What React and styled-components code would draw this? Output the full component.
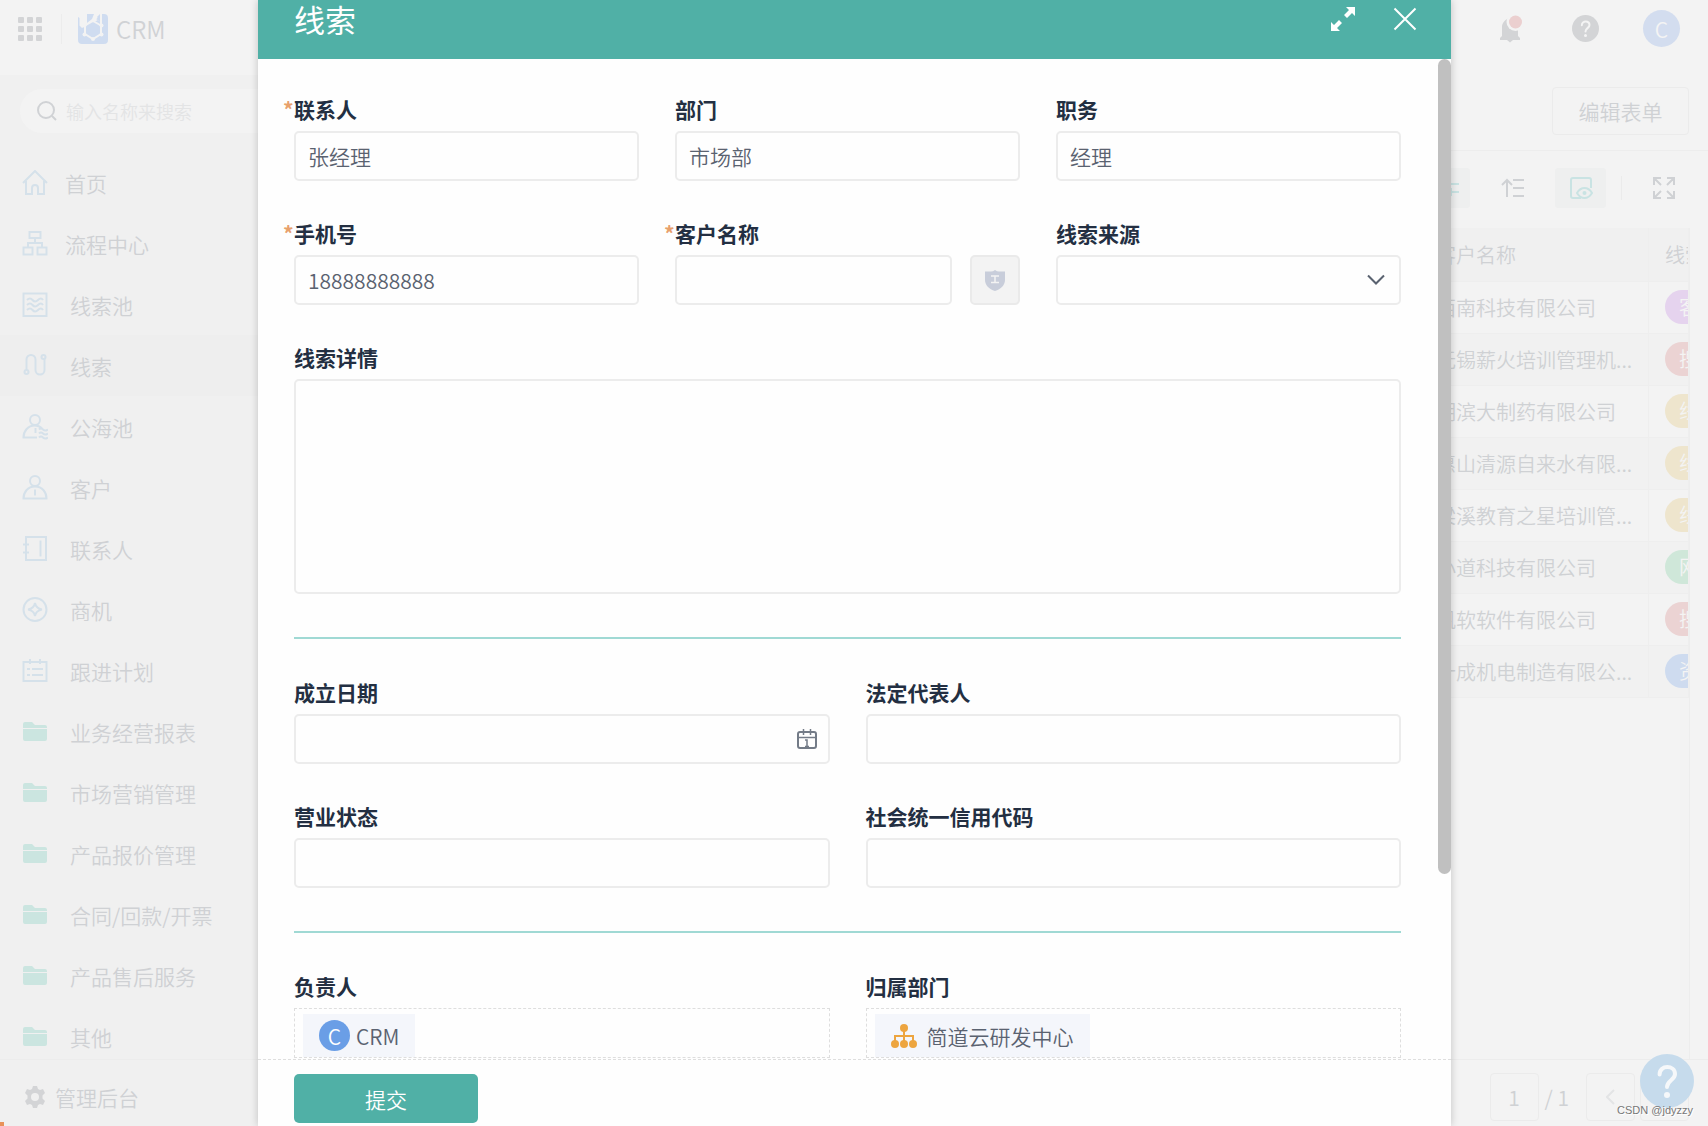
import React from "react";
import styled, { createGlobalStyle, css } from "styled-components";

const GlobalStyle = createGlobalStyle`
    * {
        box-sizing: border-box;
    }

    body {
        margin: 0;
        font-family: "Noto Sans CJK SC", "Noto Sans", sans-serif;
        font-size: 21px;
        font-weight: 350;
        color: #5a6270;
        background: #f3f3f3;
    }

    button, input, select, textarea {
        font: inherit;
        color: inherit;
    }

    button {
        padding: 0;
        border: none;
        background: none;
    }
`;

const Page = styled.div`
    display: flex;
    flex-direction: column;
    position: relative;
    height: 100vh;
    overflow: hidden;
`;

const TopBar = styled.header`
    display: flex;
    align-items: center;
    flex: none;
    height: 75px;
    padding: 0 28px 18px 18px;
    background: #f3f3f3;
`;

const Brand = styled.div`
    display: flex;
    align-items: center;
    gap: 8px;
    flex: 1;
    margin-left: 19px;
    padding-left: 16px;
    border-left: 1px solid #ececec;
    font-size: 24px;
    line-height: 30px;
    color: #d0d2d5;
`;

const TopActions = styled.div`
    display: flex;
    align-items: center;
    gap: 44px;
`;

const Avatar = styled.span`
    display: inline-flex;
    align-items: center;
    justify-content: center;
    border-radius: 50%;

    ${props => css`
        width: ${props.$size}px;
        height: ${props.$size}px;
        color: ${props.$color};
        background: ${props.$bg};
    `}
`;

const Columns = styled.div`
    display: flex;
    flex: 1;
    min-height: 0;
`;

const Sidebar = styled.aside`
    display: flex;
    flex-direction: column;
    width: 280px;
    background: #f0f0f0;
`;

const Search = styled.label`
    display: flex;
    align-items: center;
    gap: 7px;
    height: 44px;
    margin: 14px 0 19px 20px;
    padding-left: 17px;
    border-radius: 22px;
    background: #f3f3f3;
`;

const SearchInput = styled.input`
    flex: 1;
    min-width: 0;
    border: none;
    outline: none;
    background: none;
    font-size: 18px;

    &::placeholder {
        color: #e3e4e5;
    }
`;

const Nav = styled.nav`
    flex: 1;
    min-height: 0;
    overflow: hidden;
`;

const NavItem = styled.a`
    display: flex;
    align-items: center;
    height: 61px;
    padding-left: 22px;
    color: #cfd1d4;
    text-decoration: none;
    gap: ${props => (props.$nested ? "22px" : "17px")};
    background: ${props => (props.$active ? "#eeeeee" : "none")};
`;

const SidebarFooter = styled.a`
    display: flex;
    align-items: center;
    flex: none;
    gap: 10px;
    height: 67px;
    padding: 8px 0 0 25px;
    border-top: 1px solid #ececec;
    color: #cfd1d4;
    text-decoration: none;
`;

const Main = styled.main`
    display: flex;
    flex-direction: column;
    flex: 1;
    min-width: 0;
    color: #cfd1d4;
`;

const FormBar = styled.div`
    display: flex;
    align-items: center;
    justify-content: flex-end;
    height: 76px;
    padding: 0 19px 3px;
    border-bottom: 1px solid #ededed;
`;

const EditButton = styled.button`
    width: 137px;
    height: 48px;
    border: 1px solid #ebebeb;
    border-radius: 4px;
`;

const Toolbar = styled.div`
    display: flex;
    align-items: center;
    justify-content: flex-end;
    height: 77px;
    padding: 0 33px 4px 0;
`;

const ToolGroup = styled.div`
    display: flex;
    gap: 17px;
`;

const ToolButton = styled.button`
    display: flex;
    align-items: center;
    justify-content: center;
    width: 51px;
    height: 40px;
    border-radius: 3px;
    color: ${props => (props.$active ? "#c9e3e3" : "#cfd1d4")};
    background: ${props => (props.$active ? "#eeefef" : "none")};
`;

const ToolSplit = styled.span`
    width: 1px;
    height: 24px;
    margin: 0 31px 0 15px;
    background: #ebebeb;
`;

const TableWrap = styled.div`
    flex: 1;
    min-height: 0;
    margin: 0 18px;
    overflow: hidden;
    border-right: 1px solid #ededed;
`;

const Table = styled.table`
    width: 100%;
    table-layout: fixed;
    border-collapse: collapse;
    font-size: 20px;

    tbody tr:nth-child(even) {
        background: #f1f1f1;
    }
`;

const Cell = styled.td`
    height: 52px;
    padding: 0 0 0 16px;
    border-right: 1px solid #eeeeee;
    border-bottom: 1px solid #eeeeee;
    overflow: hidden;
    white-space: nowrap;
`;

const HeadCell = styled(Cell)`
    height: 53px;
    background: #f0f0f0;
    font-weight: 350;
    text-align: left;
`;

const StateTag = styled.span`
    display: inline-block;
    padding: 0 14px;
    border-radius: 17px;
    line-height: 34px;
    color: #f4f4f4;
    vertical-align: middle;
    background: ${props => props.$bg};
`;

const Pager = styled.div`
    display: flex;
    align-items: center;
    justify-content: flex-end;
    flex: none;
    height: 67px;
    padding: 8px 19px 0 0;
    border-top: 1px solid #ececec;
`;

const PageInput = styled.input`
    width: 49px;
    height: 48px;
    border: 1px solid #ebebeb;
    border-radius: 4px;
    background: none;
    text-align: center;
`;

const PageTotal = styled.span`
    margin: 0 12px 0 6px;
`;

const PageButton = styled.button`
    display: flex;
    align-items: center;
    justify-content: center;
    width: 49px;
    height: 48px;
    margin-left: 5px;
    border: 1px solid #ebebeb;
    border-radius: 4px;
`;

/* dialog above the page */

const Overlay = styled.div`
    display: flex;
    position: absolute;
    inset: 0;
    padding: 0 257px 0 258px;
`;

const Modal = styled.section`
    display: flex;
    flex-direction: column;
    flex: 1;
    min-width: 0;
    background: #fefefe;
    box-shadow: 0 0 8px rgba(0, 0, 0, 0.2);
`;

const ModalHeader = styled.div`
    display: flex;
    align-items: center;
    flex: none;
    height: 59px;
    padding: 0 34px 21px 36px;
    color: #fff;
    background: #50b0a6;
`;

const ModalTitle = styled.h1`
    flex: 1;
    margin: 0;
    font-size: 31px;
    line-height: 38px;
    font-weight: 400;
`;

const IconButton = styled.button`
    display: flex;
    margin-left: 38px;
    color: inherit;
`;

const ModalBody = styled.div`
    display: flex;
    flex: 1;
    min-height: 0;
`;

const Form = styled.form`
    flex: 1;
    min-width: 0;
    padding: 36px 37px 0 36px;
    overflow: hidden;
`;

const FieldGrid = styled.div`
    display: grid;
    grid-template-columns: repeat(${props => props.$columns}, minmax(0, 1fr));
    gap: 38px 36px;
`;

const Divider = styled.hr`
    height: 2px;
    margin: 43px 0 39px;
    border: none;
    background: #a0d9d4;
`;

const FieldBox = styled.div`
    display: flex;
    flex-direction: column;
    gap: 8px;
    min-width: 0;
    grid-column: ${props => (props.$wide ? "1 / -1" : "auto")};
`;

const Label = styled.label`
    line-height: 28px;
    font-weight: 700;
    color: #232f42;
`;

const Required = styled.span`
    display: inline-block;
    width: 11px;
    margin-left: -11px;
    color: #e8a06c;
`;

const control = css`
    width: 100%;
    min-width: 0;
    border: 2px solid #ececec;
    border-radius: 5px;
    outline: none;
    background: #fefefe;
    color: #5a6270;
`;

const Input = styled.input`
    ${control}
    height: 50px;
    padding: 0 12px;
`;

const TextArea = styled.textarea`
    ${control}
    display: block;
    height: 215px;
    padding: 10px 12px;
    resize: none;
`;

const Select = styled.select`
    ${control}
    height: 50px;
    padding: 0 12px;
    appearance: none;
`;

const ControlRow = styled.div`
    display: flex;
    gap: 18px;
`;

const CheckButton = styled.button`
    display: flex;
    align-items: center;
    justify-content: center;
    flex: none;
    width: 50px;
    height: 50px;
    border: 2px solid #eaeaea;
    border-radius: 5px;
    color: #c8cdda;
    background: #f3f3f3;
`;

const WithIcon = styled.div`
    position: relative;
    color: #5a6270;

    > svg {
        position: absolute;
        top: 50%;
        right: ${props => props.$right};
        transform: translateY(-50%);
        pointer-events: none;
    }
`;

const MemberBox = styled.output`
    display: block;
    height: 50px;
    padding: 5px 8px 0;
    border: 1px dashed #dedede;
`;

const Member = styled.span`
    display: inline-flex;
    align-items: center;
    gap: ${props => props.$gap};
    height: 43px;
    padding: 0 16px;
    color: #5a6270;
    background: #f4f6fb;
`;

const ScrollTrack = styled.div`
    display: grid;
    grid-template-rows: 815fr 185fr;
    width: 13px;
`;

const ScrollThumb = styled.div`
    border-radius: 7px;
    background: #c0c0c0;
`;

const ModalFooter = styled.div`
    flex: none;
    height: 67px;
    padding: 14px 36px 0;
    border-top: 1px dashed #dedede;
`;

const SubmitButton = styled.button`
    width: 184px;
    height: 49px;
    border-radius: 5px;
    color: #fff;
    background: #50b0a6;
`;

const HelpBubble = styled.button`
    display: flex;
    position: absolute;
    right: 14px;
    bottom: 18px;
    border-radius: 50%;
`;

const Watermark = styled.span`
    position: absolute;
    right: 15px;
    bottom: 8px;
    font-family: "Liberation Sans", Arial, sans-serif;
    font-size: 11px;
    font-weight: 400;
    line-height: 16px;
    color: #777;
    text-shadow: 1px 1px 0 #fff;
`;

const CornerMark = styled.span`
    position: absolute;
    left: 0;
    bottom: 0;
    width: 4px;
    height: 4px;
    background: #e8925a;
`;

const line = { fill: "none", stroke: "currentColor", strokeWidth: 2 };

const GridIcon = () => (
    <svg width="24" height="24" viewBox="0 0 24 24" fill="#d3d4d6">
        {[0, 9, 18].map(y =>
            [0, 9, 18].map(x => <rect key={`${x}-${y}`} x={x} y={y} width="6" height="6" rx="1" />)
        )}
    </svg>
);

const Logo = () => (
    <svg width="30" height="30" viewBox="0 0 30 30">
        <path d="M0 3l1 8 3 3 4-2 6-3 6-3 4 3V0h2a4 4 0 0 1 4 4v22a4 4 0 0 1-4 4H4a4 4 0 0 1-4-4z" fill="#cfdcf0" />
        <path d="M0 3h1.500v9H6l3-2V0H0z" fill="#f3f3f3" />
        <path d="M0 3l1.500 1v10H0zM9 0h7l-2 5-5 4zM18 4l4-4h1v8l-5-3z" fill="#cfdcf0" />
        <path d="M15 7l8 4.500v8.500L15 25l-8-5v-8.500z" fill="#cfdcf0" stroke="#f3f3f3" strokeWidth="2" />
        <path d="M15 7l4-4M23 11.500V0" stroke="#f3f3f3" strokeWidth="2" />
        <g fill="#f3f3f3">
            <circle cx="6.500" cy="20.500" r="2" />
            <circle cx="23.500" cy="20.500" r="2" />
            <circle cx="15" cy="25" r="2" />
            <circle cx="23.500" cy="11.500" r="2" />
            <circle cx="6.500" cy="11.500" r="2" />
        </g>
    </svg>
);

const BellIcon = () => (
    <svg width="28" height="28" viewBox="0 0 28 28">
        <path d="M10 3C5 4 2 8 2 12v9l-2 2v2h7l3 2.500 3-2.500h7v-2l-2-2v-9c0-4-3-8-8-9z" fill="#d3d4d6" />
        <circle cx="15.500" cy="7" r="9" fill="#f3f3f3" />
        <circle cx="15.500" cy="7" r="6.500" fill="#ebcfcf" />
    </svg>
);

const QuestionIcon = ({ size, bg, color }) => (
    <svg width={size} height={size} viewBox="0 0 27 27">
        <circle cx="13.500" cy="13.500" r="13.500" fill={bg} />
        <path d="M9.800 10.200c0-5 7.700-4.700 7.700-.2 0 3-4 3.300-4 6.500" fill="none" stroke={color} strokeWidth="2" strokeLinecap="round" />
        <circle cx="13.500" cy="20.500" r="1.500" fill={color} />
    </svg>
);

const SearchIcon = () => (
    <svg width="20" height="20" viewBox="0 0 20 20" {...line} stroke="#d0d2d5">
        <circle cx="9" cy="9" r="8" />
        <path d="M15 15l4 4" />
    </svg>
);

const navShapes = {
    home: <path d="M1 13L13 1l12 12M4 11v13h6v-6a3 3 0 0 1 6 0v6h6V11" />,
    flow: <path d="M7.500 1h11v6h-11zM13 7v5M6 16v-4h14v4M1.500 16.500h9v7h-9zM15.500 16.500h9v7h-9z" />,
    pool: <path d="M1.500 1.500h23v22.500h-23zM5 8q3-3 5.500 0t5.500 0 5 0M5 13q3-3 5.500 0t5.500 0 5 0M5 18q3-3 5.500 0t5.500 0 5 0" />,
    clue: (
        <>
            <path d="M4.500 18V6.500a4.500 4.500 0 0 1 9 0V17a4.500 4.500 0 0 0 9 0V5" />
            <circle cx="4.500" cy="19" r="2" />
            <circle cx="21.500" cy="4" r="2" />
        </>
    ),
    sea: (
        <>
            <circle cx="13" cy="6" r="5" />
            <path d="M15 23.500H1.500c0-6 4-12 11.500-12 3 0 5 1 7 3M13.500 14v5M17 15.500q2-2 4 0t5 0M17 19.500q2-2 4 0t5 0M17 23.500q2-2 4 0t5 0" />
        </>
    ),
    customer: (
        <>
            <circle cx="13" cy="6" r="5" />
            <path d="M1.500 23.500c0-6 4-12 11.500-12s11.500 6 11.500 12zM13 14.500v6" />
        </>
    ),
    contact: <path d="M4 1h20v23H4zM1 8.500h6M1 16.500h6M18.500 4.500v16" />,
    chance: (
        <>
            <circle cx="13" cy="12.500" r="11.500" />
            <path d="M13 6q1 5.500 7 6.500-6 1-7 6.500-1-5.500-7-6.500 6-1 7-6.500z" />
        </>
    ),
    plan: <path d="M1.500 4h23v19h-23zM8 1v5M18 1v5M5 11h3M10 11h11M5 17h3M10 17h11" />,
};

const NavIcon = ({ name }) =>
    name === "folder" ? (
        <svg width="26" height="26" viewBox="0 0 26 26" fill="#cbe5e0">
            <path d="M1 5a2 2 0 0 1 2-2h7l3 3h10a2 2 0 0 1 2 2v1H1zM1 10h24v10a2 2 0 0 1-2 2H3a2 2 0 0 1-2-2z" />
        </svg>
    ) : (
        <svg width="26" height="26" viewBox="0 0 26 26" {...line} stroke="#d5e1ea">
            {navShapes[name]}
        </svg>
    );

const GearIcon = () => (
    <svg width="20" height="22" viewBox="0 0 20 22">
        <path
            fill="#d3d4d6"
            fillRule="evenodd"
            d="M8 0h4l1 3 2 1 3-1 2 4-2.500 2.500v3L20 15l-2 4-3-1-2 1-1 3H8l-1-3-2-1-3 1-2-4 2.500-2.500v-3L0 7l2-4 3 1 2-1zM10 7a4 4 0 1 0 0 8 4 4 0 0 0 0-8z"
        />
    </svg>
);

const FilterIcon = () => (
    <svg width="28" height="24" viewBox="0 0 28 24" {...line}>
        <path d="M1 8h27M1 16h27M8 4v8M20 12v8" />
    </svg>
);

const SortIcon = () => (
    <svg width="24" height="20" viewBox="0 0 24 20" {...line}>
        <path d="M6 19V2M1 7l5-5 5 5M12 2h11M12 10h11M12 18h11" />
    </svg>
);

const PreviewIcon = () => (
    <svg width="24" height="24" viewBox="0 0 24 24" {...line}>
        <path d="M12 22H4a2 2 0 0 1-2-2V4a2 2 0 0 1 2-2h16a2 2 0 0 1 2 2v8" />
        <path d="M8 17q3-5 7.500-5t7.500 5q-3 5-7.500 5T8 17z" />
        <circle cx="15.500" cy="17" r="1" />
    </svg>
);

const FullscreenIcon = () => (
    <svg width="22" height="22" viewBox="0 0 22 22" {...line}>
        <path d="M1 8V1h7M1 1l7 7M14 1h7v7M21 1l-7 7M1 14v7h7M1 21l7-7M21 14v7h-7M21 21l-7-7" />
    </svg>
);

const ExpandIcon = () => (
    <svg width="24" height="24" viewBox="0 0 24 24" fill="currentColor">
        <path d="M15 0h9v9l-3-3-5 5-3-3 5-5zM9 24H0v-9l3 3 5-5 3 3-5 5z" />
    </svg>
);

const CloseIcon = () => (
    <svg width="24" height="24" viewBox="0 0 24 24" {...line}>
        <path d="M1.500 1.500l21 21M22.500 1.500l-21 21" />
    </svg>
);

const ShieldIcon = () => (
    <svg width="20" height="21" viewBox="0 0 20 21">
        <path d="M10 0q2 1.500 4 1.500h6V10c0 5-4 9-10 11C4 19 0 15 0 10V1.500h6Q8 1.500 10 0z" fill="currentColor" />
        <path d="M6 6h8M10 6v6M6 12.500h8" stroke="#f3f3f3" strokeWidth="1.500" />
    </svg>
);

const ChevronIcon = () => (
    <svg width="18" height="11" viewBox="0 0 18 11" {...line}>
        <path d="M1 1l8 8 8-8" />
    </svg>
);

const CalendarIcon = () => (
    <svg width="20" height="20" viewBox="0 0 20 20" fill="none" stroke="#737b87" strokeWidth="2">
        <rect x="1" y="3" width="18" height="16" rx="2" />
        <path d="M1 8.500h18M6.500 0v6M13.500 0v6M8 11h2v7M8 17.500h4" strokeWidth="1.500" />
    </svg>
);

const OrgIcon = () => (
    <svg width="26" height="24" viewBox="0 0 26 24">
        <path d="M13 4v16M4 20v-8h18v8" fill="none" stroke="#eda53f" strokeWidth="2" />
        <g fill="#eda53f">
            <circle cx="13" cy="4" r="4" />
            <circle cx="4" cy="20" r="4" />
            <circle cx="13" cy="20" r="4" />
            <circle cx="22" cy="20" r="4" />
        </g>
    </svg>
);

const navItems = [
    { icon: "home", text: "首页" },
    { icon: "flow", text: "流程中心" },
    { icon: "pool", text: "线索池", nested: true },
    { icon: "clue", text: "线索", nested: true, active: true },
    { icon: "sea", text: "公海池", nested: true },
    { icon: "customer", text: "客户", nested: true },
    { icon: "contact", text: "联系人", nested: true },
    { icon: "chance", text: "商机", nested: true },
    { icon: "plan", text: "跟进计划", nested: true },
    { icon: "folder", text: "业务经营报表", nested: true },
    { icon: "folder", text: "市场营销管理", nested: true },
    { icon: "folder", text: "产品报价管理", nested: true },
    { icon: "folder", text: "合同/回款/开票", nested: true },
    { icon: "folder", text: "产品售后服务", nested: true },
    { icon: "folder", text: "其他", nested: true },
];

const rows = [
    { name: "西南科技有限公司", state: "客", color: "#e5d3ee" },
    { name: "无锡薪火培训管理机...", state: "搜", color: "#ebd3d3" },
    { name: "湖滨大制药有限公司", state: "线", color: "#eee5cd" },
    { name: "惠山清源自来水有限...", state: "线", color: "#eee5cd" },
    { name: "梁溪教育之星培训管...", state: "线", color: "#eee5cd" },
    { name: "小道科技有限公司", state: "网", color: "#cfe7d9" },
    { name: "帆软软件有限公司", state: "搜", color: "#ebd3d3" },
    { name: "十成机电制造有限公...", state: "资", color: "#cedbef" },
];

function Field({ id, label, required, wide, children }) {
    return (
        <FieldBox $wide={wide}>
            <Label htmlFor={id}>
                {required && <Required>*</Required>}
                {label}
            </Label>
            {children}
        </FieldBox>
    );
}

function SideMenu() {
    return (
        <Sidebar>
            <Search>
                <SearchIcon />
                <SearchInput type="text" placeholder="输入名称来搜索" />
            </Search>
            <Nav>
                {navItems.map(item => (
                    <NavItem key={item.text} href="#" $nested={item.nested} $active={item.active}>
                        <NavIcon name={item.icon} />
                        {item.text}
                    </NavItem>
                ))}
            </Nav>
            <SidebarFooter href="#">
                <GearIcon />
                管理后台
            </SidebarFooter>
        </Sidebar>
    );
}

function ClueList() {
    return (
        <Main>
            <FormBar>
                <EditButton type="button">编辑表单</EditButton>
            </FormBar>
            <Toolbar>
                <ToolGroup>
                    <ToolButton type="button" aria-label="filter" $active><FilterIcon /></ToolButton>
                    <ToolButton type="button" aria-label="sort"><SortIcon /></ToolButton>
                    <ToolButton type="button" aria-label="preview" $active><PreviewIcon /></ToolButton>
                </ToolGroup>
                <ToolSplit />
                <FullscreenIcon />
            </Toolbar>
            <TableWrap>
                <Table>
                    <colgroup>
                        <col />
                        <col width="229" />
                        <col width="40" />
                    </colgroup>
                    <thead>
                        <tr>
                            <HeadCell as="th" />
                            <HeadCell as="th">客户名称</HeadCell>
                            <HeadCell as="th">线索</HeadCell>
                        </tr>
                    </thead>
                    <tbody>
                        {rows.map(row => (
                            <tr key={row.name}>
                                <Cell />
                                <Cell>{row.name}</Cell>
                                <Cell>
                                    <StateTag $bg={row.color}>{row.state}</StateTag>
                                </Cell>
                            </tr>
                        ))}
                    </tbody>
                </Table>
            </TableWrap>
            <Pager>
                <PageInput type="text" aria-label="page" defaultValue="1" />
                <PageTotal>/ 1</PageTotal>
                <PageButton type="button" aria-label="previous">
                    <svg width="9" height="16" viewBox="0 0 9 16" {...line} stroke="#e3e4e5"><path d="M8 1L1 8l7 7" /></svg>
                </PageButton>
                <PageButton type="button" aria-label="next" />
            </Pager>
        </Main>
    );
}

function ClueDialog() {
    return (
        <Overlay>
            <Modal role="dialog" aria-labelledby="dialog-title">
                <ModalHeader>
                    <ModalTitle id="dialog-title">线索</ModalTitle>
                    <IconButton type="button" aria-label="expand"><ExpandIcon /></IconButton>
                    <IconButton type="button" aria-label="close"><CloseIcon /></IconButton>
                </ModalHeader>
                <ModalBody>
                    <Form id="clue-form">
                        <FieldGrid $columns={3}>
                            <Field id="contact" label="联系人" required>
                                <Input id="contact" defaultValue="张经理" />
                            </Field>
                            <Field id="dept" label="部门">
                                <Input id="dept" defaultValue="市场部" />
                            </Field>
                            <Field id="post" label="职务">
                                <Input id="post" defaultValue="经理" />
                            </Field>
                            <Field id="phone" label="手机号" required>
                                <Input id="phone" type="tel" defaultValue="18888888888" />
                            </Field>
                            <Field id="customer" label="客户名称" required>
                                <ControlRow>
                                    <Input id="customer" />
                                    <CheckButton type="button" aria-label="check"><ShieldIcon /></CheckButton>
                                </ControlRow>
                            </Field>
                            <Field id="source" label="线索来源">
                                <WithIcon $right="16px">
                                    <Select id="source" defaultValue="">
                                        <option value=""></option>
                                    </Select>
                                    <ChevronIcon />
                                </WithIcon>
                            </Field>
                            <Field id="detail" label="线索详情" wide>
                                <TextArea id="detail" />
                            </Field>
                        </FieldGrid>
                        <Divider />
                        <FieldGrid $columns={2}>
                            <Field id="founded" label="成立日期">
                                <WithIcon $right="13px">
                                    <Input id="founded" />
                                    <CalendarIcon />
                                </WithIcon>
                            </Field>
                            <Field id="legal" label="法定代表人">
                                <Input id="legal" />
                            </Field>
                            <Field id="status" label="营业状态">
                                <Input id="status" />
                            </Field>
                            <Field id="credit" label="社会统一信用代码">
                                <Input id="credit" />
                            </Field>
                        </FieldGrid>
                        <Divider />
                        <FieldGrid $columns={2}>
                            <Field id="owner" label="负责人">
                                <MemberBox id="owner">
                                    <Member $gap="6px">
                                        <Avatar $size={31} $bg="#6a9ee6" $color="#fff">C</Avatar>
                                        CRM
                                    </Member>
                                </MemberBox>
                            </Field>
                            <Field id="owner-dept" label="归属部门">
                                <MemberBox id="owner-dept">
                                    <Member $gap="10px">
                                        <OrgIcon />
                                        简道云研发中心
                                    </Member>
                                </MemberBox>
                            </Field>
                        </FieldGrid>
                    </Form>
                    <ScrollTrack>
                        <ScrollThumb />
                    </ScrollTrack>
                </ModalBody>
                <ModalFooter>
                    <SubmitButton type="submit" form="clue-form">提交</SubmitButton>
                </ModalFooter>
            </Modal>
        </Overlay>
    );
}

export default function App() {
    return (
        <Page>
            <GlobalStyle />
            <TopBar>
                <GridIcon />
                <Brand>
                    <Logo />
                    CRM
                </Brand>
                <TopActions>
                    <BellIcon />
                    <QuestionIcon size={27} bg="#d3d4d6" color="#f4f4f4" />
                    <Avatar $size={37} $bg="#d3ddef" $color="#f4f4f4">C</Avatar>
                </TopActions>
            </TopBar>
            <Columns>
                <SideMenu />
                <ClueList />
            </Columns>
            <ClueDialog />
            <HelpBubble type="button" aria-label="help">
                <QuestionIcon size={54} bg="#c6dbec" color="#f6f8fa" />
            </HelpBubble>
            <Watermark>CSDN @jdyzzy</Watermark>
            <CornerMark />
        </Page>
    );
}
